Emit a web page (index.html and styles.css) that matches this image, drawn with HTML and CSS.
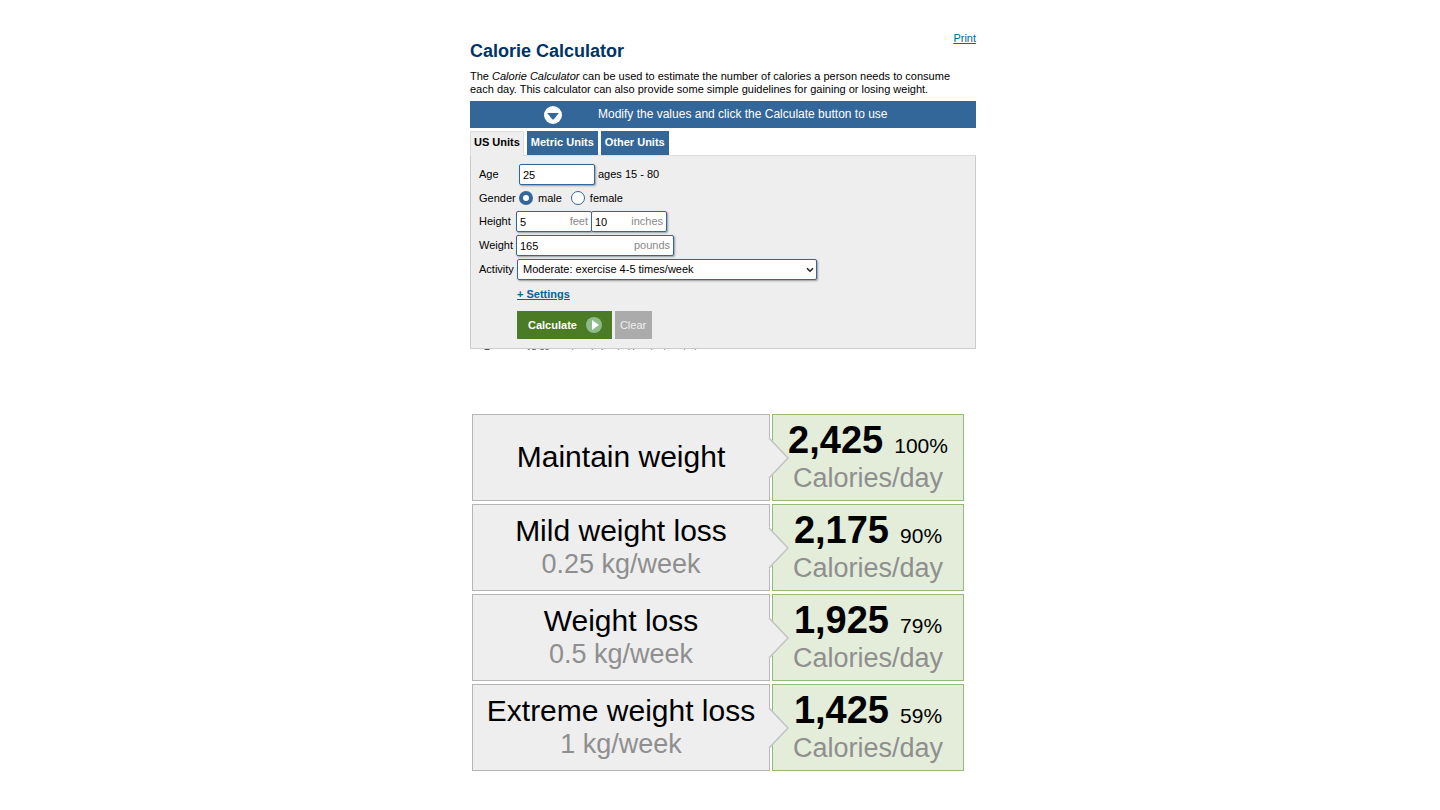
FILE: index.html
```html
<!DOCTYPE html>
<html lang="en">
<head>
<meta charset="utf-8">
<meta name="viewport" content="width=device-width, initial-scale=1">
<title>Calorie Calculator</title>
<link rel="stylesheet" href="styles.css">
</head>
<body>
<main class="page">
  <header class="page-head">
    <h1 class="title">Calorie Calculator</h1>
    <a class="print" href="#">Print</a>
  </header>
  <p class="intro">The <em>Calorie Calculator</em> can be used to estimate the number of calories a person needs to consume each day. This calculator can also provide some simple guidelines for gaining or losing weight.</p>
  <div class="banner">
    <svg class="banner-icon" viewBox="0 0 18 18" aria-hidden="true"><circle cx="9" cy="9" r="9" fill="#fff"/><path d="M3.2 7h11.6L9.8 13.2q-.8.8-1.6 0z" fill="#336699"/></svg>
    <span>Modify the values and click the Calculate button to use</span>
  </div>
  <nav class="tabs">
    <a class="tab tab-active" href="#">US Units</a>
    <a class="tab" href="#">Metric Units</a>
    <a class="tab" href="#">Other Units</a>
  </nav>
  <form class="panel">
    <div class="row">
      <label class="label" for="age">Age</label>
      <div class="controls inset"><input class="field age" id="age" type="text" value="25"><span>ages 15 - 80</span></div>
    </div>
    <div class="row row-short">
      <span class="label">Gender</span>
      <div class="controls inset">
        <label class="choice"><input class="radio" type="radio" name="gender" checked>male</label>
        <label class="choice"><input class="radio" type="radio" name="gender">female</label>
      </div>
    </div>
    <div class="row">
      <label class="label" for="feet">Height</label>
      <div class="controls joined">
        <span class="unit-box"><input class="field" id="feet" type="text" value="5"><label class="unit" for="feet">feet</label></span>
        <span class="unit-box"><input class="field" id="inches" type="text" value="10" aria-label="Height, inches"><label class="unit" for="inches">inches</label></span>
      </div>
    </div>
    <div class="row">
      <label class="label" for="weight">Weight</label>
      <div class="controls"><span class="unit-box wide"><input class="field" id="weight" type="text" value="165"><label class="unit" for="weight">pounds</label></span></div>
    </div>
    <div class="row">
      <label class="label" for="activity">Activity</label>
      <div class="controls select-box">
        <select class="field select" id="activity"><option>Moderate: exercise 4-5 times/week</option></select>
        <svg class="chevron" viewBox="0 0 8 6" aria-hidden="true"><path d="M1 1.2l3 3 3-3" fill="none" stroke="#222" stroke-width="1.6"/></svg>
      </div>
    </div>
    <a class="settings" href="#">+ Settings</a>
    <div class="actions">
      <button class="button calculate" type="button">Calculate
        <svg class="play" viewBox="0 0 16 16" aria-hidden="true"><circle cx="8" cy="8" r="8" fill="#8dbb8a"/><path d="M6 3l7 5-7 5z" fill="#fff"/></svg>
      </button>
      <button class="button clear" type="button">Clear</button>
    </div>
  </form>
  <p class="clipped"><b>Exercise:</b> 15-30 minutes of elevated heart rate activity.</p>

  <section class="results">
    <div class="goal"><span class="name">Maintain weight</span>
      <svg class="arrow" viewBox="0 0 22 42" aria-hidden="true"><path d="M0 0h1L21 21 1 42H0z" fill="#eee"/><path d="M1 1L20 21 1 41" fill="none" stroke="#c2c2c2" stroke-width="1.5"/></svg></div>
    <div class="amount"><span><b class="calories">2,425</b> <span class="percent">100%</span></span><span class="sub">Calories/day</span></div>
    <div class="goal"><span class="name">Mild weight loss</span><span class="sub">0.25 kg/week</span>
      <svg class="arrow" viewBox="0 0 22 42" aria-hidden="true"><path d="M0 0h1L21 21 1 42H0z" fill="#eee"/><path d="M1 1L20 21 1 41" fill="none" stroke="#c2c2c2" stroke-width="1.5"/></svg></div>
    <div class="amount"><span><b class="calories">2,175</b> <span class="percent">90%</span></span><span class="sub">Calories/day</span></div>
    <div class="goal"><span class="name">Weight loss</span><span class="sub">0.5 kg/week</span>
      <svg class="arrow" viewBox="0 0 22 42" aria-hidden="true"><path d="M0 0h1L21 21 1 42H0z" fill="#eee"/><path d="M1 1L20 21 1 41" fill="none" stroke="#c2c2c2" stroke-width="1.5"/></svg></div>
    <div class="amount"><span><b class="calories">1,925</b> <span class="percent">79%</span></span><span class="sub">Calories/day</span></div>
    <div class="goal"><span class="name">Extreme weight loss</span><span class="sub">1 kg/week</span>
      <svg class="arrow" viewBox="0 0 22 42" aria-hidden="true"><path d="M0 0h1L21 21 1 42H0z" fill="#eee"/><path d="M1 1L20 21 1 41" fill="none" stroke="#c2c2c2" stroke-width="1.5"/></svg></div>
    <div class="amount"><span><b class="calories">1,425</b> <span class="percent">59%</span></span><span class="sub">Calories/day</span></div>
  </section>
</main>
</body>
</html>
```

FILE: styles.css
```css
* { box-sizing: border-box; }
body {
  margin: 0;
  background: #fff;
  color: #000;
  font: 11px/13px "Liberation Sans", Arial, sans-serif;
}
.page { max-width: 512px; margin: 0 auto; padding: 32px 0 32px 6px; }
.page-head { display: flex; justify-content: space-between; align-items: flex-start; }
.title { margin: 8px 0 0; color: #003366; font-size: 18px; line-height: 22px; }
.print { color: #006699; }
.intro { margin: 8px 0 5px; }
.banner {
  display: flex;
  align-items: center;
  gap: 36px;
  padding: 4px 74px;
  min-height: 27px;
  background: #336699;
  color: #fff;
  font-size: 12px;
}
.banner-icon { width: 18px; height: 18px; flex: none; }
.tabs { display: flex; gap: 3px; margin-top: 3px; }
.tab {
  padding: 5px 4px 6px;
  background: #336699;
  color: #fff;
  font-weight: bold;
  text-decoration: none;
}
.tab-active {
  position: relative;
  margin-bottom: -1px;
  padding: 4px 3px 7px;
  border: 1px solid #ddd;
  border-bottom: 0;
  background: #eee;
  color: #000;
}
.panel { padding: 8px 8px 9px; border: 1px solid #ccc; border-top-color: #ddd; background: #eee; }
.row { display: flex; align-items: center; min-height: 21px; margin-bottom: 3px; }
.row-short { min-height: 20px; }
.label { width: 37px; flex: none; white-space: nowrap; }
.controls { display: flex; align-items: center; }
.inset { padding-left: 3px; gap: 3px; }
.field {
  height: 21px;
  padding: 0 3px;
  border: 1px solid #336699;
  border-radius: 2px;
  background: #fff;
  box-shadow: 1px 1px 2px #999;
  color: #000;
  font: inherit;
}
.age { width: 76px; }
.choice { display: flex; align-items: center; gap: 5px; margin-right: 6px; }
.radio {
  appearance: none;
  width: 14px;
  height: 14px;
  margin: 0;
  border: 1px solid #336699;
  border-radius: 50%;
  background: #fff;
}
.radio:checked { border-width: 4px; }
.unit-box { display: grid; align-items: center; width: 76px; }
.unit-box + .unit-box { margin-left: -1px; }
.unit-box > * { grid-area: 1 / 1; }
.unit-box .field { width: 100%; }
.unit { justify-self: end; padding-right: 4px; color: #888; }
.wide { width: 158px; }
.select-box { display: grid; align-items: center; width: 301px; padding-left: 1px; }
.select-box > * { grid-area: 1 / 1; }
.select { appearance: none; width: 100%; padding: 0 5px; }
.chevron { justify-self: end; width: 8px; height: 6px; margin-right: 3px; pointer-events: none; }
.settings { display: inline-block; margin: 5px 0 10px 38px; color: #006699; font-weight: bold; }
.actions { display: flex; gap: 3px; padding-left: 38px; }
.button {
  display: flex;
  align-items: center;
  height: 28px;
  border: 0;
  color: #fff;
  font: inherit;
}
.calculate { gap: 9px; padding: 0 10px 0 11px; background: #4c7b25; font-weight: bold; }
.play { width: 16px; height: 16px; }
.clear { padding: 0 6px 0 5px; background: #ababab; color: #eee; }
.clipped { height: 1px; margin: 0 14px; overflow: hidden; color: #555; font-size: 9px; line-height: 7px; }
.results {
  display: grid;
  grid-template-columns: 298fr 192fr;
  gap: 3px 2px;
  margin: 64px 12px 0 2px;
}
.goal, .amount {
  display: flex;
  flex-direction: column;
  align-items: center;
  justify-content: center;
  min-height: 87px;
  padding-bottom: 2px;
  white-space: nowrap;
}
.goal { position: relative; border: 1px solid #b5b5b5; background: #eee; }
.amount { border: 1px solid #93bb78; background: #e3edda; }
.name { font-size: 30px; line-height: 34px; }
.sub { color: #8f8f8f; font-size: 27px; line-height: 32px; }
.calories { font-size: 38px; line-height: 43px; }
.percent { margin-left: 8px; font-size: 21px; }
.arrow { position: absolute; top: 22px; right: -21px; width: 22px; height: 42px; }
```
